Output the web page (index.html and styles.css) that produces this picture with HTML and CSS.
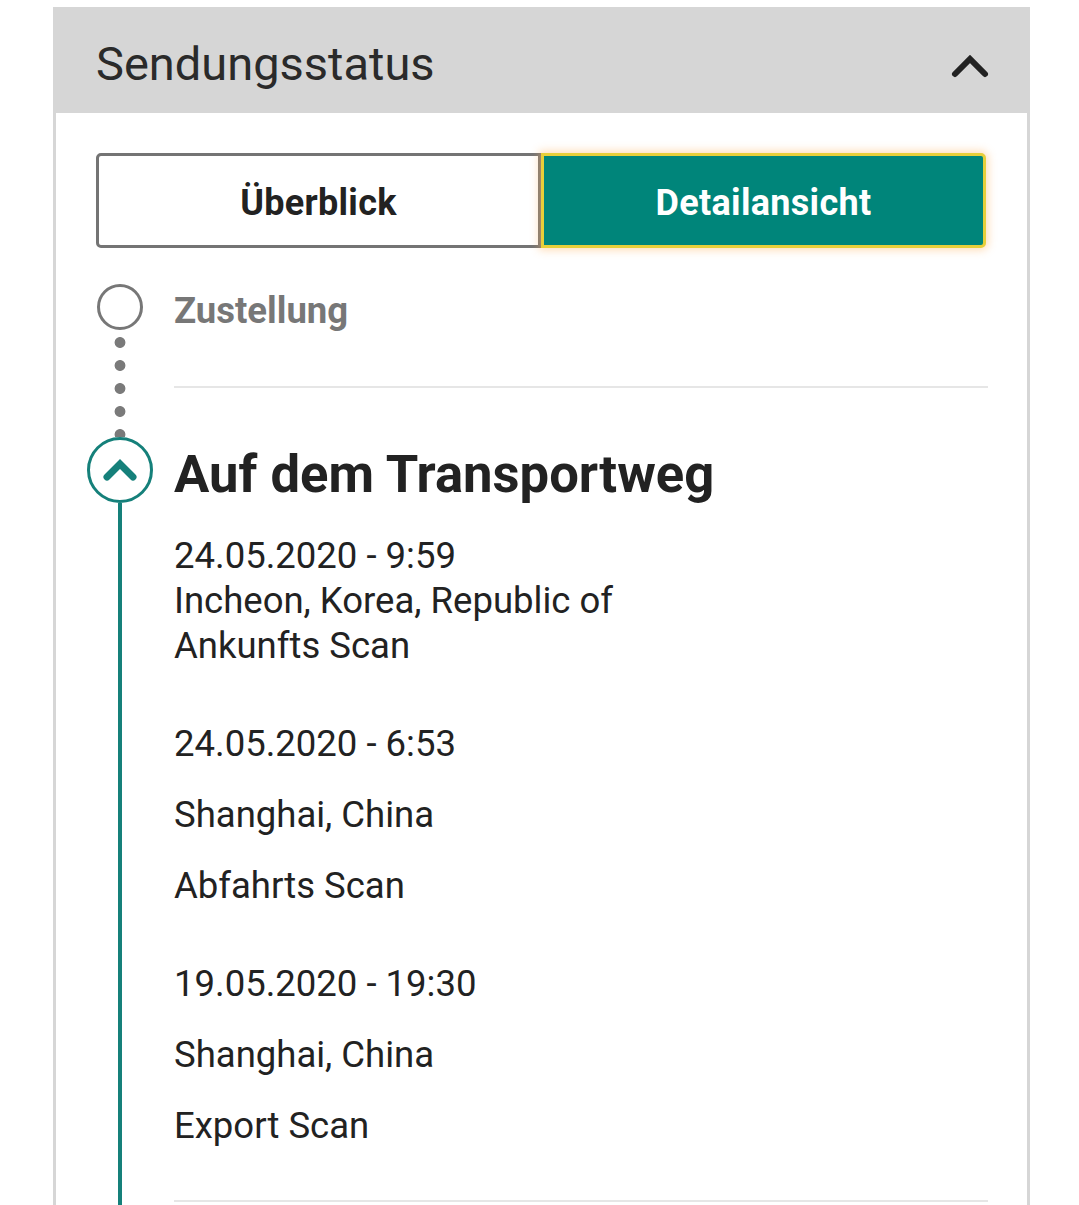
FILE: index.html
```html
<!DOCTYPE html>
<html lang="de">
<head>
<meta charset="utf-8">
<title>Sendungsstatus</title>
<link rel="stylesheet" href="styles.css">
</head>
<body>
<section class="card">
  <header class="card-header">
    <h2 class="card-title">Sendungsstatus</h2>
    <svg class="collapse-icon" width="40" height="26" viewBox="0 0 40 26" aria-hidden="true">
      <polyline points="5,21 20,6 35,21" fill="none" stroke="#222" stroke-width="6" stroke-linecap="round" stroke-linejoin="miter"/>
    </svg>
  </header>
  <div class="card-body">
    <div class="toggle">
      <button class="tab">Überblick</button>
      <button class="tab tab-active">Detailansicht</button>
    </div>
    <ol class="timeline">
      <li class="step step-pending">
        <div class="rail">
          <span class="ring"></span>
          <span class="dots"></span>
        </div>
        <div class="content">
          <h3 class="step-title">Zustellung</h3>
          <div class="divider divider-top"></div>
        </div>
      </li>
      <li class="step step-current">
        <div class="rail">
          <svg class="current-icon" width="66" height="66" viewBox="0 0 66 66" aria-hidden="true">
            <circle cx="33" cy="33" r="31.5" fill="#fff" stroke="#15807a" stroke-width="3"/>
            <polyline points="20,40 33,27 46,40" fill="none" stroke="#15807a" stroke-width="7" stroke-linecap="round"/>
          </svg>
          <span class="line"></span>
        </div>
        <div class="content">
          <h3 class="current-title">Auf dem Transportweg</h3>
          <div class="entry">
            <p>24.05.2020 - 9:59<br>Incheon, Korea, Republic of<br>Ankunfts Scan</p>
          </div>
          <div class="entry">
            <p>24.05.2020 - 6:53</p>
            <p>Shanghai, China</p>
            <p>Abfahrts Scan</p>
          </div>
          <div class="entry">
            <p>19.05.2020 - 19:30</p>
            <p>Shanghai, China</p>
            <p>Export Scan</p>
          </div>
          <div class="divider"></div>
        </div>
      </li>
    </ol>
  </div>
</section>
</body>
</html>
```
FILE: styles.css
```css
* { box-sizing: border-box; }

body {
  margin: 0;
  background: #fff;
  color: #222;
  font-family: Roboto, "Liberation Sans", sans-serif;
}

.card {
  margin: 7px 0 0 53px;
  width: 977px;
  border-left: 3px solid #d6d6d6;
  border-right: 3px solid #d6d6d6;
}

.card-header {
  height: 106px;
  background: #d6d6d6;
  display: flex;
  align-items: center;
  justify-content: space-between;
  padding: 0 37px 0 40px;
}

.card-title {
  margin: 7px 0 0;
  font-size: 47px;
  font-weight: 400;
  color: #2a2a2a;
}

.collapse-icon { margin-top: 11px; }

.card-body {
  padding: 40px 41px 0 40px;
}

.toggle {
  display: flex;
  height: 95px;
}

.tab {
  flex: 1;
  font-family: Roboto, "Liberation Sans", sans-serif;
  font-size: 36px;
  font-weight: 700;
  letter-spacing: 0.3px;
  color: #222;
  background: #fff;
  border: 3px solid #747474;
  border-radius: 5px 0 0 5px;
  padding: 4px 0 0;
}

.tab-active {
  color: #fff;
  background: #00857a;
  border: 3px solid #e7cf3a;
  border-radius: 0 5px 5px 0;
  box-shadow: 0 0 8px 2px rgba(255, 176, 90, 0.45);
}

.timeline {
  list-style: none;
  margin: 36px 0 0;
  padding: 0;
}

.step {
  display: flex;
  gap: 30px;
}

.rail {
  width: 48px;
  flex: none;
  display: flex;
  flex-direction: column;
  align-items: center;
}

.ring {
  width: 46px;
  height: 46px;
  border: 3.5px solid #777;
  border-radius: 50%;
}

.dots {
  width: 12px;
  height: 107px;
  background: radial-gradient(circle at 6px 12.5px, #7a7a7a 5px, transparent 5.8px) 0 0 / 12px 23px repeat-y;
}

.content {
  flex: 1;
  min-width: 0;
}

.step-title {
  margin: 0;
  padding-top: 4px;
  font-size: 36.5px;
  line-height: 46px;
  font-weight: 700;
  color: #777;
}

.divider {
  height: 2px;
  background: #e6e6e6;
  margin-right: -2px;
}

.divider-top { margin-top: 52px; }

.current-icon { flex: none; display: block; }

.line {
  flex: 1;
  width: 4px;
  background: #15807a;
}

.current-title {
  margin: 0;
  padding-top: 4px;
  font-size: 52.6px;
  line-height: 66px;
  font-weight: 700;
  color: #222;
}

.entry {
  margin-top: 26px;
}

.entry + .entry { margin-top: 53px; }

.entry p {
  margin: 0;
  font-size: 36.5px;
  line-height: 45px;
  color: #222;
}

.entry p + p { margin-top: 26px; }

.content > .divider:last-child {
  margin-top: 52px;
  margin-bottom: 20px;
}
```
